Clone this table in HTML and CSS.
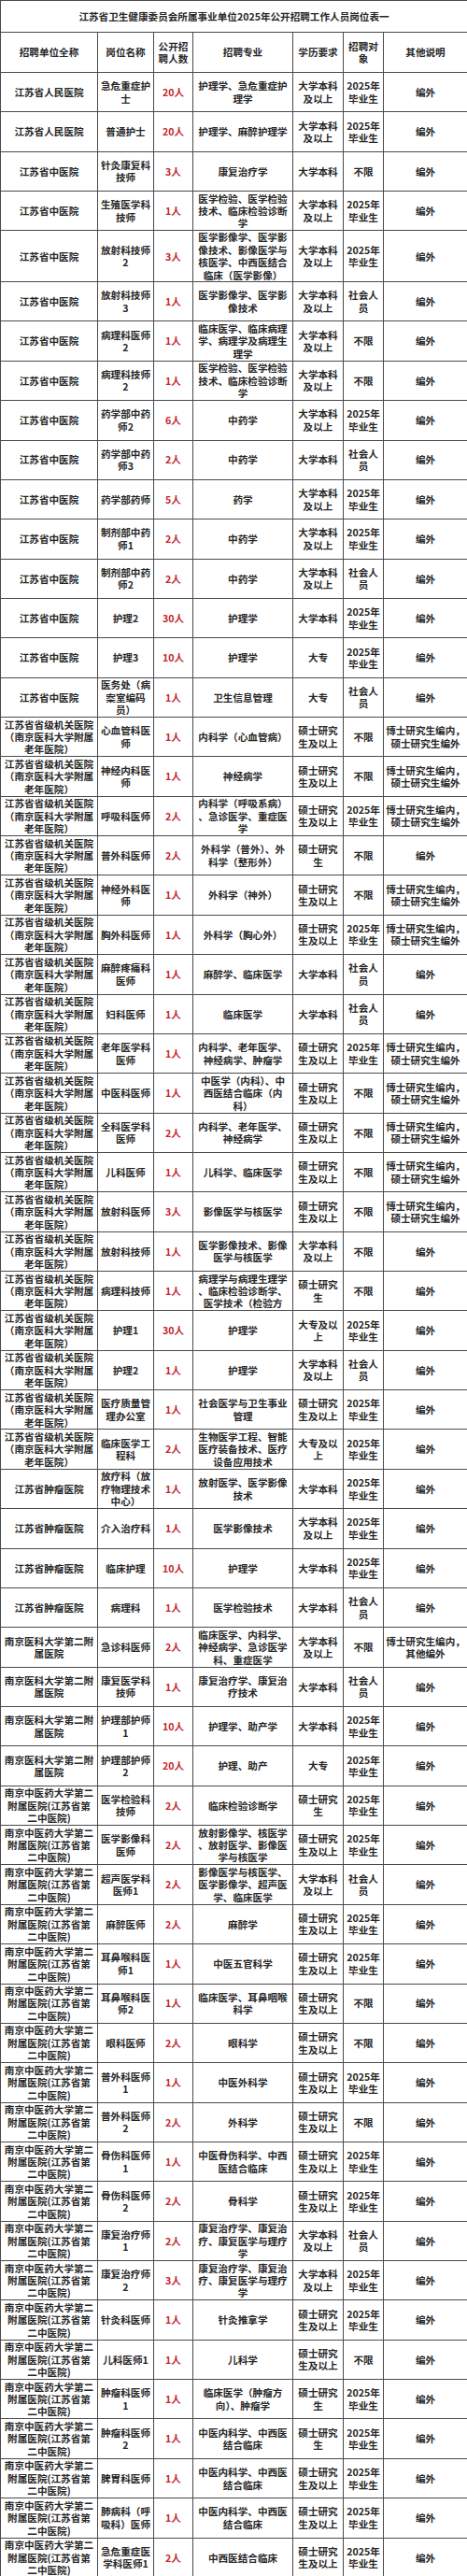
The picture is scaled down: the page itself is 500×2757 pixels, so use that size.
FILE: index.html
```html
<!DOCTYPE html>
<html lang="zh-CN">
<head>
<meta charset="utf-8">
<title>江苏省卫生健康委员会所属事业单位2025年公开招聘工作人员岗位表一</title>
<link rel="stylesheet" href="styles.css">
</head>
<body>
<table class="sheet">
<colgroup>
<col class="c-unit"><col class="c-post"><col class="c-num"><col class="c-major"><col class="c-edu"><col class="c-target"><col class="c-note">
</colgroup>
<thead>
<tr class="r-title"><th colspan="7">江苏省卫生健康委员会所属事业单位2025年公开招聘工作人员岗位表一</th></tr>
<tr class="r-head"><th>招聘单位全称</th><th>岗位名称</th><th>公开招<br>聘人数</th><th>招聘专业</th><th>学历要求</th><th>招聘对<br>象</th><th>其他说明</th></tr>
</thead>
<tbody>
<tr><td>江苏省人民医院</td><td>急危重症护<br>士</td><td class="num">20人</td><td>护理学、急危重症护<br>理学</td><td>大学本科<br>及以上</td><td>2025年<br>毕业生</td><td>编外</td></tr>
<tr><td>江苏省人民医院</td><td>普通护士</td><td class="num">20人</td><td>护理学、麻醉护理学</td><td>大学本科<br>及以上</td><td>2025年<br>毕业生</td><td>编外</td></tr>
<tr><td>江苏省中医院</td><td>针灸康复科<br>技师</td><td class="num">3人</td><td>康复治疗学</td><td>大学本科</td><td>不限</td><td>编外</td></tr>
<tr><td>江苏省中医院</td><td>生殖医学科<br>技师</td><td class="num">1人</td><td>医学检验、医学检验<br>技术、临床检验诊断<br>学</td><td>大学本科<br>及以上</td><td>2025年<br>毕业生</td><td>编外</td></tr>
<tr class="r-tall"><td>江苏省中医院</td><td>放射科技师<br>2</td><td class="num">3人</td><td>医学影像学、医学影<br>像技术、影像医学与<br>核医学、中西医结合<br>临床（医学影像）</td><td>大学本科<br>及以上</td><td>2025年<br>毕业生</td><td>编外</td></tr>
<tr><td>江苏省中医院</td><td>放射科技师<br>3</td><td class="num">1人</td><td>医学影像学、医学影<br>像技术</td><td>大学本科<br>及以上</td><td>社会人<br>员</td><td>编外</td></tr>
<tr><td>江苏省中医院</td><td>病理科医师<br>2</td><td class="num">1人</td><td>临床医学、临床病理<br>学、病理学及病理生<br>理学</td><td>大学本科<br>及以上</td><td>不限</td><td>编外</td></tr>
<tr><td>江苏省中医院</td><td>病理科技师<br>2</td><td class="num">1人</td><td>医学检验、医学检验<br>技术、临床检验诊断<br>学</td><td>大学本科<br>及以上</td><td>不限</td><td>编外</td></tr>
<tr><td>江苏省中医院</td><td>药学部中药<br>师2</td><td class="num">6人</td><td>中药学</td><td>大学本科<br>及以上</td><td>2025年<br>毕业生</td><td>编外</td></tr>
<tr><td>江苏省中医院</td><td>药学部中药<br>师3</td><td class="num">2人</td><td>中药学</td><td>大学本科</td><td>社会人<br>员</td><td>编外</td></tr>
<tr><td>江苏省中医院</td><td>药学部药师</td><td class="num">5人</td><td>药学</td><td>大学本科<br>及以上</td><td>2025年<br>毕业生</td><td>编外</td></tr>
<tr><td>江苏省中医院</td><td>制剂部中药<br>师1</td><td class="num">2人</td><td>中药学</td><td>大学本科<br>及以上</td><td>2025年<br>毕业生</td><td>编外</td></tr>
<tr><td>江苏省中医院</td><td>制剂部中药<br>师2</td><td class="num">2人</td><td>中药学</td><td>大学本科<br>及以上</td><td>社会人<br>员</td><td>编外</td></tr>
<tr><td>江苏省中医院</td><td>护理2</td><td class="num">30人</td><td>护理学</td><td>大学本科</td><td>2025年<br>毕业生</td><td>编外</td></tr>
<tr><td>江苏省中医院</td><td>护理3</td><td class="num">10人</td><td>护理学</td><td>大专</td><td>2025年<br>毕业生</td><td>编外</td></tr>
<tr><td>江苏省中医院</td><td>医务处（病<br>案室编码<br>员）</td><td class="num">1人</td><td>卫生信息管理</td><td>大专</td><td>社会人<br>员</td><td>编外</td></tr>
<tr><td>江苏省省级机关医院<br>（南京医科大学附属<br>老年医院）</td><td>心血管科医<br>师</td><td class="num">1人</td><td>内科学（心血管病）</td><td>硕士研究<br>生及以上</td><td>不限</td><td>博士研究生编内，<br>硕士研究生编外</td></tr>
<tr><td>江苏省省级机关医院<br>（南京医科大学附属<br>老年医院）</td><td>神经内科医<br>师</td><td class="num">1人</td><td>神经病学</td><td>硕士研究<br>生及以上</td><td>不限</td><td>博士研究生编内，<br>硕士研究生编外</td></tr>
<tr><td>江苏省省级机关医院<br>（南京医科大学附属<br>老年医院）</td><td>呼吸科医师</td><td class="num">2人</td><td>内科学（呼吸系病）<br>、急诊医学、重症医<br>学</td><td>硕士研究<br>生及以上</td><td>2025年<br>毕业生</td><td>博士研究生编内，<br>硕士研究生编外</td></tr>
<tr><td>江苏省省级机关医院<br>（南京医科大学附属<br>老年医院）</td><td>普外科医师</td><td class="num">2人</td><td>外科学（普外）、外<br>科学（整形外）</td><td>硕士研究<br>生</td><td>不限</td><td>编外</td></tr>
<tr><td>江苏省省级机关医院<br>（南京医科大学附属<br>老年医院）</td><td>神经外科医<br>师</td><td class="num">1人</td><td>外科学（神外）</td><td>硕士研究<br>生及以上</td><td>不限</td><td>博士研究生编内，<br>硕士研究生编外</td></tr>
<tr><td>江苏省省级机关医院<br>（南京医科大学附属<br>老年医院）</td><td>胸外科医师</td><td class="num">1人</td><td>外科学（胸心外）</td><td>硕士研究<br>生及以上</td><td>2025年<br>毕业生</td><td>博士研究生编内，<br>硕士研究生编外</td></tr>
<tr><td>江苏省省级机关医院<br>（南京医科大学附属<br>老年医院）</td><td>麻醉疼痛科<br>医师</td><td class="num">1人</td><td>麻醉学、临床医学</td><td>大学本科</td><td>社会人<br>员</td><td>编外</td></tr>
<tr><td>江苏省省级机关医院<br>（南京医科大学附属<br>老年医院）</td><td>妇科医师</td><td class="num">1人</td><td>临床医学</td><td>大学本科</td><td>社会人<br>员</td><td>编外</td></tr>
<tr><td>江苏省省级机关医院<br>（南京医科大学附属<br>老年医院）</td><td>老年医学科<br>医师</td><td class="num">1人</td><td>内科学、老年医学、<br>神经病学、肿瘤学</td><td>硕士研究<br>生及以上</td><td>2025年<br>毕业生</td><td>博士研究生编内，<br>硕士研究生编外</td></tr>
<tr><td>江苏省省级机关医院<br>（南京医科大学附属<br>老年医院）</td><td>中医科医师</td><td class="num">1人</td><td>中医学（内科）、中<br>西医结合临床（内<br>科）</td><td>硕士研究<br>生及以上</td><td>不限</td><td>博士研究生编内，<br>硕士研究生编外</td></tr>
<tr><td>江苏省省级机关医院<br>（南京医科大学附属<br>老年医院）</td><td>全科医学科<br>医师</td><td class="num">2人</td><td>内科学、老年医学、<br>神经病学</td><td>硕士研究<br>生及以上</td><td>不限</td><td>博士研究生编内，<br>硕士研究生编外</td></tr>
<tr><td>江苏省省级机关医院<br>（南京医科大学附属<br>老年医院）</td><td>儿科医师</td><td class="num">1人</td><td>儿科学、临床医学</td><td>硕士研究<br>生及以上</td><td>不限</td><td>博士研究生编内，<br>硕士研究生编外</td></tr>
<tr><td>江苏省省级机关医院<br>（南京医科大学附属<br>老年医院）</td><td>放射科医师</td><td class="num">3人</td><td>影像医学与核医学</td><td>硕士研究<br>生及以上</td><td>不限</td><td>博士研究生编内，<br>硕士研究生编外</td></tr>
<tr><td>江苏省省级机关医院<br>（南京医科大学附属<br>老年医院）</td><td>放射科技师</td><td class="num">1人</td><td>医学影像技术、影像<br>医学与核医学</td><td>大学本科<br>及以上</td><td>不限</td><td>编外</td></tr>
<tr><td>江苏省省级机关医院<br>（南京医科大学附属<br>老年医院）</td><td>病理科技师</td><td class="num">1人</td><td>病理学与病理生理学<br>、临床检验诊断学、<br>医学技术（检验方</td><td>硕士研究<br>生</td><td>不限</td><td>编外</td></tr>
<tr><td>江苏省省级机关医院<br>（南京医科大学附属<br>老年医院）</td><td>护理1</td><td class="num">30人</td><td>护理学</td><td>大专及以<br>上</td><td>2025年<br>毕业生</td><td>编外</td></tr>
<tr><td>江苏省省级机关医院<br>（南京医科大学附属<br>老年医院）</td><td>护理2</td><td class="num">1人</td><td>护理学</td><td>大学本科<br>及以上</td><td>社会人<br>员</td><td>编外</td></tr>
<tr><td>江苏省省级机关医院<br>（南京医科大学附属<br>老年医院）</td><td>医疗质量管<br>理办公室</td><td class="num">1人</td><td>社会医学与卫生事业<br>管理</td><td>硕士研究<br>生及以上</td><td>2025年<br>毕业生</td><td>编外</td></tr>
<tr><td>江苏省省级机关医院<br>（南京医科大学附属<br>老年医院）</td><td>临床医学工<br>程科</td><td class="num">2人</td><td>生物医学工程、智能<br>医疗装备技术、医疗<br>设备应用技术</td><td>大专及以<br>上</td><td>2025年<br>毕业生</td><td>编外</td></tr>
<tr><td>江苏省肿瘤医院</td><td>放疗科（放<br>疗物理技术<br>中心）</td><td class="num">1人</td><td>放射医学、医学影像<br>技术</td><td>大学本科</td><td>2025年<br>毕业生</td><td>编外</td></tr>
<tr><td>江苏省肿瘤医院</td><td>介入治疗科</td><td class="num">1人</td><td>医学影像技术</td><td>大学本科<br>及以上</td><td>2025年<br>毕业生</td><td>编外</td></tr>
<tr><td>江苏省肿瘤医院</td><td>临床护理</td><td class="num">10人</td><td>护理学</td><td>大学本科</td><td>2025年<br>毕业生</td><td>编外</td></tr>
<tr><td>江苏省肿瘤医院</td><td>病理科</td><td class="num">1人</td><td>医学检验技术</td><td>大学本科</td><td>社会人<br>员</td><td>编外</td></tr>
<tr><td>南京医科大学第二附<br>属医院</td><td>急诊科医师</td><td class="num">2人</td><td>临床医学、内科学、<br>神经病学、急诊医学<br>科、重症医学</td><td>大学本科<br>及以上</td><td>不限</td><td>博士研究生编内，<br>其他编外</td></tr>
<tr><td>南京医科大学第二附<br>属医院</td><td>康复医学科<br>技师</td><td class="num">1人</td><td>康复治疗学、康复治<br>疗技术</td><td>大学本科</td><td>社会人<br>员</td><td>编外</td></tr>
<tr><td>南京医科大学第二附<br>属医院</td><td>护理部护师<br>1</td><td class="num">10人</td><td>护理学、助产学</td><td>大学本科</td><td>2025年<br>毕业生</td><td>编外</td></tr>
<tr><td>南京医科大学第二附<br>属医院</td><td>护理部护师<br>2</td><td class="num">20人</td><td>护理、助产</td><td>大专</td><td>2025年<br>毕业生</td><td>编外</td></tr>
<tr><td>南京中医药大学第二<br>附属医院(江苏省第<br>二中医院)</td><td>医学检验科<br>技师</td><td class="num">2人</td><td>临床检验诊断学</td><td>硕士研究<br>生</td><td>2025年<br>毕业生</td><td>编外</td></tr>
<tr><td>南京中医药大学第二<br>附属医院(江苏省第<br>二中医院)</td><td>医学影像科<br>医师</td><td class="num">2人</td><td>放射影像学、核医学<br>、放射医学、影像医<br>学与核医学</td><td>硕士研究<br>生及以上</td><td>2025年<br>毕业生</td><td>编外</td></tr>
<tr><td>南京中医药大学第二<br>附属医院(江苏省第<br>二中医院)</td><td>超声医学科<br>医师1</td><td class="num">2人</td><td>影像医学与核医学、<br>医学影像学、超声医<br>学、临床医学</td><td>大学本科<br>及以上</td><td>社会人<br>员</td><td>编外</td></tr>
<tr><td>南京中医药大学第二<br>附属医院(江苏省第<br>二中医院)</td><td>麻醉医师</td><td class="num">2人</td><td>麻醉学</td><td>硕士研究<br>生及以上</td><td>2025年<br>毕业生</td><td>编外</td></tr>
<tr><td>南京中医药大学第二<br>附属医院(江苏省第<br>二中医院)</td><td>耳鼻喉科医<br>师1</td><td class="num">1人</td><td>中医五官科学</td><td>硕士研究<br>生及以上</td><td>2025年<br>毕业生</td><td>编外</td></tr>
<tr><td>南京中医药大学第二<br>附属医院(江苏省第<br>二中医院)</td><td>耳鼻喉科医<br>师2</td><td class="num">1人</td><td>临床医学、耳鼻咽喉<br>科学</td><td>硕士研究<br>生及以上</td><td>不限</td><td>编外</td></tr>
<tr><td>南京中医药大学第二<br>附属医院(江苏省第<br>二中医院)</td><td>眼科医师</td><td class="num">2人</td><td>眼科学</td><td>硕士研究<br>生及以上</td><td>不限</td><td>编外</td></tr>
<tr><td>南京中医药大学第二<br>附属医院(江苏省第<br>二中医院)</td><td>普外科医师<br>1</td><td class="num">1人</td><td>中医外科学</td><td>硕士研究<br>生及以上</td><td>2025年<br>毕业生</td><td>编外</td></tr>
<tr><td>南京中医药大学第二<br>附属医院(江苏省第<br>二中医院)</td><td>普外科医师<br>2</td><td class="num">2人</td><td>外科学</td><td>硕士研究<br>生及以上</td><td>不限</td><td>编外</td></tr>
<tr><td>南京中医药大学第二<br>附属医院(江苏省第<br>二中医院)</td><td>骨伤科医师<br>1</td><td class="num">1人</td><td>中医骨伤科学、中西<br>医结合临床</td><td>硕士研究<br>生及以上</td><td>2025年<br>毕业生</td><td>编外</td></tr>
<tr><td>南京中医药大学第二<br>附属医院(江苏省第<br>二中医院)</td><td>骨伤科医师<br>2</td><td class="num">2人</td><td>骨科学</td><td>硕士研究<br>生及以上</td><td>2025年<br>毕业生</td><td>编外</td></tr>
<tr><td>南京中医药大学第二<br>附属医院(江苏省第<br>二中医院)</td><td>康复治疗师<br>1</td><td class="num">2人</td><td>康复治疗学、康复治<br>疗、康复医学与理疗<br>学</td><td>大学本科<br>及以上</td><td>社会人<br>员</td><td>编外</td></tr>
<tr><td>南京中医药大学第二<br>附属医院(江苏省第<br>二中医院)</td><td>康复治疗师<br>2</td><td class="num">3人</td><td>康复治疗学、康复治<br>疗、康复医学与理疗<br>学</td><td>大学本科<br>及以上</td><td>2025年<br>毕业生</td><td>编外</td></tr>
<tr><td>南京中医药大学第二<br>附属医院(江苏省第<br>二中医院)</td><td>针灸科医师</td><td class="num">1人</td><td>针灸推拿学</td><td>硕士研究<br>生及以上</td><td>2025年<br>毕业生</td><td>编外</td></tr>
<tr><td>南京中医药大学第二<br>附属医院(江苏省第<br>二中医院)</td><td>儿科医师1</td><td class="num">1人</td><td>儿科学</td><td>硕士研究<br>生及以上</td><td>不限</td><td>编外</td></tr>
<tr><td>南京中医药大学第二<br>附属医院(江苏省第<br>二中医院)</td><td>肿瘤科医师<br>1</td><td class="num">1人</td><td>临床医学（肿瘤方<br>向）、肿瘤学</td><td>硕士研究<br>生</td><td>2025年<br>毕业生</td><td>编外</td></tr>
<tr><td>南京中医药大学第二<br>附属医院(江苏省第<br>二中医院)</td><td>肿瘤科医师<br>2</td><td class="num">1人</td><td>中医内科学、中西医<br>结合临床</td><td>硕士研究<br>生</td><td>2025年<br>毕业生</td><td>编外</td></tr>
<tr><td>南京中医药大学第二<br>附属医院(江苏省第<br>二中医院)</td><td>脾胃科医师</td><td class="num">1人</td><td>中医内科学、中西医<br>结合临床</td><td>硕士研究<br>生及以上</td><td>2025年<br>毕业生</td><td>编外</td></tr>
<tr><td>南京中医药大学第二<br>附属医院(江苏省第<br>二中医院)</td><td>肺病科（呼<br>吸科）医师</td><td class="num">1人</td><td>中医内科学、中西医<br>结合临床</td><td>硕士研究<br>生及以上</td><td>2025年<br>毕业生</td><td>编外</td></tr>
<tr><td>南京中医药大学第二<br>附属医院(江苏省第<br>二中医院)</td><td>急危重症医<br>学科医师1</td><td class="num">2人</td><td>中西医结合临床</td><td>硕士研究<br>生及以上</td><td>2025年<br>毕业生</td><td>编外</td></tr>
</tbody>
</table>
</body>
</html>
```

FILE: styles.css
```css
html, body {
  margin: 0;
  padding: 0;
  background: #ffffff;
}

.sheet {
  width: 500px;
  table-layout: fixed;
  border-collapse: collapse;
  font-family: "Noto Sans CJK SC", "Noto Sans", sans-serif;
  font-size: 10.6px;
  line-height: 13.4px;
  color: #262626;
}

.c-unit { width: 104px; }
.c-post { width: 60px; }
.c-num { width: 42px; }
.c-major { width: 107px; }
.c-edu { width: 54px; }
.c-target { width: 43px; }
.c-note { width: 90px; }

.sheet th,
.sheet td {
  border: 1px solid #4a4a4a;
  padding: 0 2px;
  text-align: center;
  vertical-align: middle;
  white-space: nowrap;
  overflow: hidden;
  font-weight: 700;
}

.r-title { height: 34px; }
.r-head { height: 43px; }

.sheet tbody tr { height: 42.36px; }
.sheet tbody tr.r-tall { height: 53.3px; }

.sheet td.num {
  color: #c4262e;
}
```
